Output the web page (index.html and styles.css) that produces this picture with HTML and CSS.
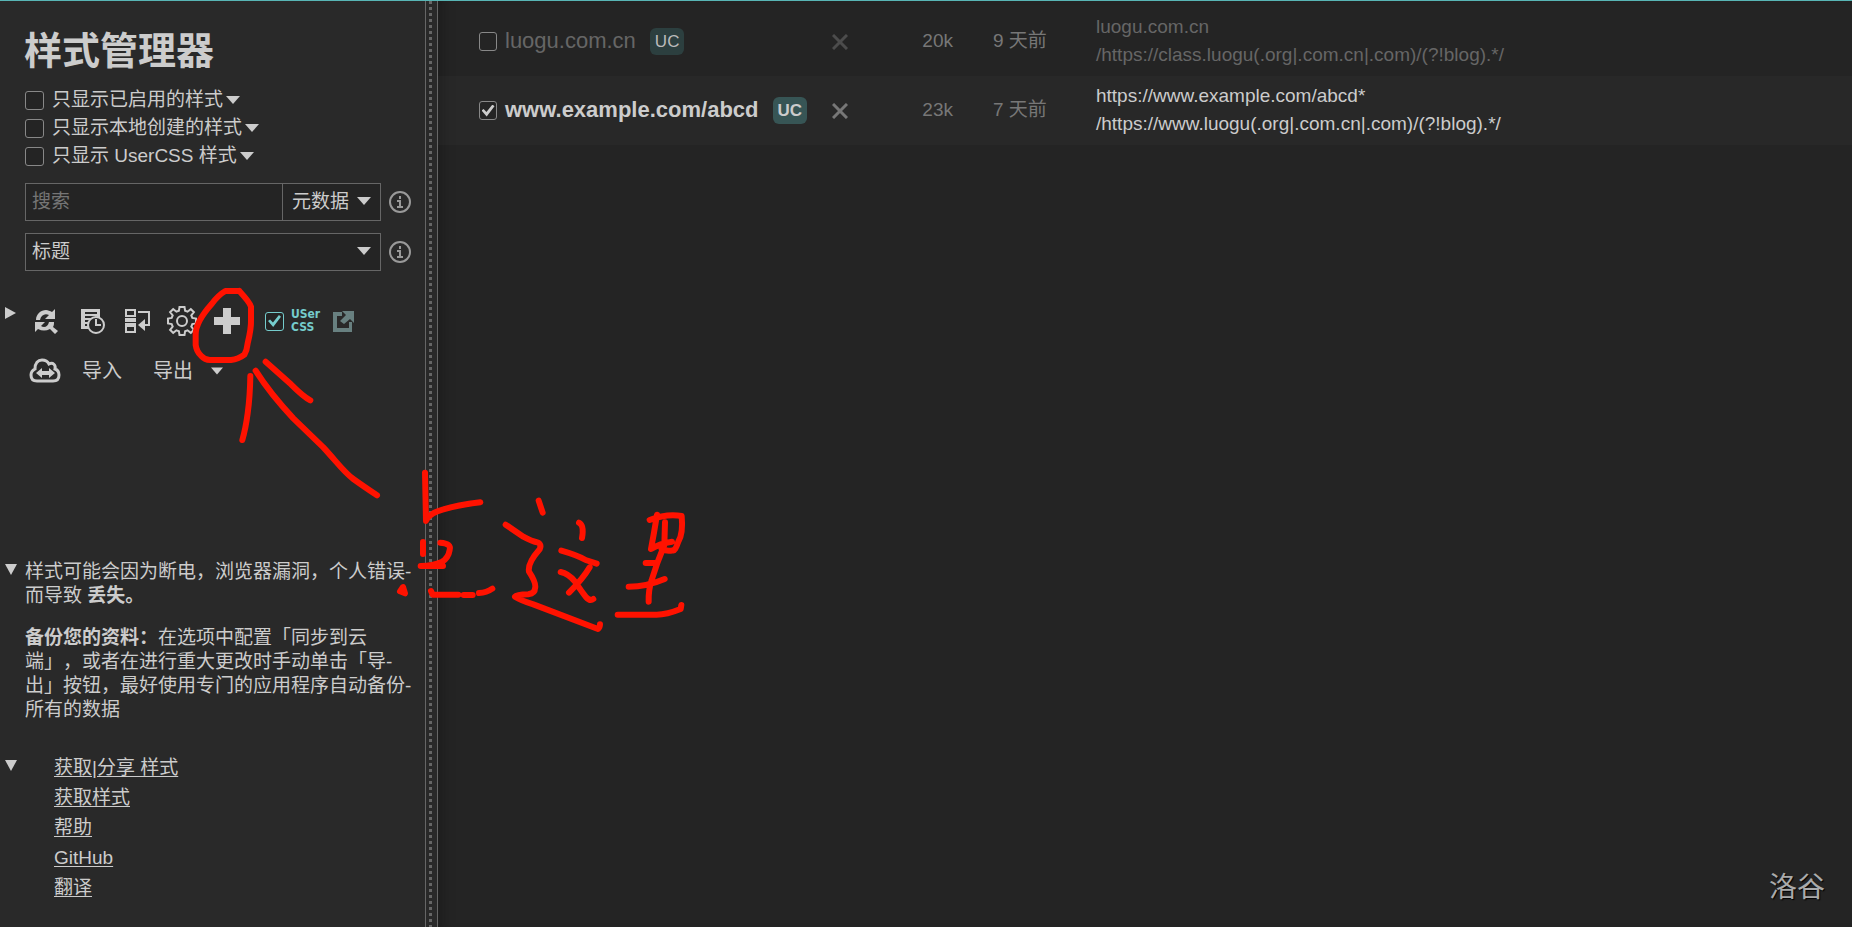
FILE: index.html
```html
<!DOCTYPE html>
<html lang="zh-CN">
<head>
  <meta charset="UTF-8">
  <meta name="viewport" content="width=device-width, initial-scale=1.0">
  <title>样式管理器</title>
  <link rel="stylesheet" href="styles.css">
</head>
<body>
  <aside class="sidebar">
    <h1>样式管理器</h1>

    <!-- filters -->
    <div class="filters">
      <div class="filter">
        <input type="checkbox" id="only-enabled">
        <label for="only-enabled">只显示已启用的样式</label>
        <svg class="arrow" viewBox="0 0 14 8"><path d="M0 0h14L7 8z"/></svg>
      </div>
      <div class="filter">
        <input type="checkbox" id="only-local">
        <label for="only-local">只显示本地创建的样式</label>
        <svg class="arrow" viewBox="0 0 14 8"><path d="M0 0h14L7 8z"/></svg>
      </div>
      <div class="filter">
        <input type="checkbox" id="only-usercss">
        <label for="only-usercss">只显示 UserCSS 样式</label>
        <svg class="arrow" viewBox="0 0 14 8"><path d="M0 0h14L7 8z"/></svg>
      </div>
    </div>

    <div class="field">
      <input type="search" class="search" placeholder="搜索" aria-label="搜索">
      <div class="select-wrap mode">
        <select aria-label="搜索范围"><option>元数据</option></select>
        <svg class="arrow" viewBox="0 0 14 8"><path d="M0 0h14L7 8z"/></svg>
      </div>
      <a href="#" class="info" aria-label="搜索帮助">
        <svg viewBox="0 0 22 22"><circle cx="11" cy="11" r="10"/><path d="M11 5v3M8 10h3v6M8 16h6"/></svg>
      </a>
    </div>
    <div class="field">
      <div class="select-wrap">
        <select aria-label="排序"><option>标题</option></select>
        <svg class="arrow" viewBox="0 0 14 8"><path d="M0 0h14L7 8z"/></svg>
      </div>
      <a href="#" class="info" aria-label="排序帮助">
        <svg viewBox="0 0 22 22"><circle cx="11" cy="11" r="10"/><path d="M11 5v3M8 10h3v6M8 16h6"/></svg>
      </a>
    </div>

    <!-- actions -->
    <section class="section actions">
      <button class="toggle" aria-label="展开">
        <svg width="11" height="12" viewBox="0 0 11 12"><path d="M0 0v12l11-6z"/></svg>
      </button>
      <div class="content">
        <div class="icons">
          <button aria-label="检查更新">
            <svg width="30" height="30" viewBox="0 0 30 30">
              <path d="M4 14C4 8 9 4 14 4c2 0 4 1 6 2l3-3v10H13l4-4C13 7 9 9 8 14z"/>
              <path d="M3 16h10l-4 4c3 2 7 1 8-4h5c0 2 0 3-1 5l5 4-3 3-5-5c-4 2-8 2-12 0l-3 3z"/>
            </svg>
          </button>
          <button aria-label="更新历史">
            <svg width="30" height="30" viewBox="0 0 30 30">
              <path fill-rule="evenodd" d="M3 3h19v20H3zM7 6v2h12V6zM7 10v2h12v-2zM7 14v2h8v-2zM7 18v2h5v-2z"/>
              <circle class="cut" cx="18" cy="19" r="8"/>
              <path class="line" d="M18 13v6h5"/>
            </svg>
          </button>
          <button aria-label="注入顺序">
            <svg width="26" height="30" viewBox="2 0 26 30">
              <path class="line" d="M4 4h9v6H4zM4 20h9v6H4zM3 13h11M3 15h11M3 18h11M16 6h11v13h-4"/>
              <path d="M16 19l7-6v12z"/>
            </svg>
          </button>
          <button aria-label="选项">
            <svg width="32" height="32" viewBox="0 0 32 32">
              <path class="line" d="M13.5 2h5l.6 3.7 2.4 1 3.3-2.6 3.1 3.1-2.6 3.3 1 2.4 3.7.6v5l-3.7.6-1 2.4 2.6 3.3-3.1 3.1-3.3-2.6-2.4 1-.6 3.7h-5l-.6-3.7-2.4-1-3.3 2.6-3.1-3.1 2.6-3.3-1-2.4-3.7-.6v-5l3.7-.6 1-2.4-2.6-3.3 3.1-3.1 3.3 2.6 2.4-1z"/>
              <circle class="line" cx="16" cy="16" r="5"/>
            </svg>
          </button>
          <button aria-label="编写新样式">
            <svg width="26" height="26" viewBox="0 0 26 26"><path d="M9 0h8v9h9v8h-9v9H9v-9H0V9h9z"/></svg>
          </button>
          <label class="usercss">
            <input type="checkbox" checked>
            <span>USer<br>CSS</span>
          </label>
          <a href="#" class="external" aria-label="在新窗口打开">
            <svg width="22" height="22" viewBox="0 0 22 22"><path d="M1 2h9v4H5v12h12v-6h3v10H1z"/><path d="M10 1h12v12l-4-4-6 5-4-3 6-6z"/></svg>
          </a>
        </div>
        <div class="backup">
          <button aria-label="同步到云端">
            <svg width="32" height="26" viewBox="0 0 32 26">
              <path class="cloud" d="M8 23C3 23 2 20 2 17c0-3 2-5 4-6C6 5 9 2 13 2c4 0 6 2 7 4 4-2 7 1 6 5 3 1 4 3 4 6 0 4-2 6-6 6z"/>
              <path d="M7 15l6-5v3h7v-3l6 5-6 5v-3h-7v3z"/>
            </svg>
          </button>
          <button>导入</button>
          <button>导出</button>
          <svg class="arrow small" viewBox="0 0 14 8"><path d="M0 0h14L7 8z"/></svg>
        </div>
      </div>
    </section>

    <section class="section notes">
      <button class="toggle" aria-label="收起">
        <svg width="12" height="11" viewBox="0 0 12 11"><path d="M0 0h12L6 11z"/></svg>
      </button>
      <div class="content">
        <p>样式可能会因为断电，浏览器漏洞，个人错误-<br>而导致 <b>丢失。</b></p>
        <p><b>备份您的资料：</b>在选项中配置「同步到云<br>端」，或者在进行重大更改时手动单击「导-<br>出」按钮，最好使用专门的应用程序自动备份-<br>所有的数据</p>
      </div>
    </section>

    <section class="section links">
      <button class="toggle" aria-label="收起">
        <svg width="12" height="11" viewBox="0 0 12 11"><path d="M0 0h12L6 11z"/></svg>
      </button>
      <nav class="content">
        <a href="#">获取|分享 样式</a>
        <a href="#">获取样式</a>
        <a href="#">帮助</a>
        <a href="#">GitHub</a>
        <a href="#">翻译</a>
      </nav>
    </section>
  </aside>
  <div class="resizer"></div>

  <main>
    <table>
      <tbody>
        <tr class="disabled">
          <td class="name">
            <div>
              <input type="checkbox" id="style-1">
              <label for="style-1">luogu.com.cn</label>
              <span class="badge">UC</span>
            </div>
          </td>
          <td class="delete"><button aria-label="删除"><svg width="16" height="16" viewBox="0 0 16 16"><path d="M1 1l14 14M15 1L1 15"/></svg></button></td>
          <td class="size">20k</td>
          <td class="age">9 天前</td>
          <td class="targets">luogu.com.cn<br>/https://class.luogu(.org|.com.cn|.com)/(?!blog).*/</td>
        </tr>
        <tr class="enabled">
          <td class="name">
            <div>
              <input type="checkbox" id="style-2" checked>
              <label for="style-2">www.example.com/abcd</label>
              <span class="badge">UC</span>
            </div>
          </td>
          <td class="delete"><button aria-label="删除"><svg width="16" height="16" viewBox="0 0 16 16"><path d="M1 1l14 14M15 1L1 15"/></svg></button></td>
          <td class="size">23k</td>
          <td class="age">7 天前</td>
          <td class="targets">https://www.example.com/abcd*<br>/https://www.luogu(.org|.com.cn|.com)/(?!blog).*/</td>
        </tr>
      </tbody>
    </table>
  </main>

  <!-- red pen marks over the page -->
  <svg class="ink" width="700" height="640" viewBox="0 0 2100 1920">
    <g transform="translate(0 840)">
      <path d="M718 33h-42Q655 45 635 72C610 100 586 135 587 165V195Q590 215 603 227Q615 240 630 240H693Q715 238 733 224Q741 210 743 190Q754 145 753 120V80Q750 68 718 33"/>
      <path d="M751 288Q750 350 743 400Q737 445 727 480"/>
      <path d="M767 272Q810 340 880 415L970 502C1010 545 1030 575 1060 597Q1085 615 1131 646"/>
      <path d="M797 245L873 313Q910 350 931 361"/>
    </g>
    <g transform="translate(1140 1350)">
      <path d="M135 68L138 213Q145 190 190 178Q230 166 301 157"/>
      <path d="M129 276V312M181 278Q215 280 209 300Q205 325 185 336Q160 348 122 348H189"/>
      <path d="M69 411L60 424 75 430zM153 423L158 434H235M251 435H278M297 429Q320 428 337 416"/>
      <path d="M476 152L488 188M377 224L430 260Q455 274 475 278Q485 285 479 298Q442 340 447 365Q470 400 465 415Q465 430 445 433Q410 434 405 440Q420 450 460 463L654 537Q660 532 660 523"/>
      <path d="M597 218Q613 225 606 264M544 302Q590 315 617 330L650 341M542 366Q565 370 585 395Q605 425 617 440Q630 455 640 447M629 352Q610 385 567 428"/>
      <path d="M831 194Q822 250 813 297Q840 280 876 275M809 210Q860 190 905 198Q910 250 895 275Q885 305 878 301Q860 305 845 297M855 217L853 285Q830 340 815 390Q805 420 806 455M797 339H830M746 410Q800 410 854 387M713 494H830Q860 494 902 477L904 465"/>
    </g>
  </svg>
  <div class="watermark">洛谷</div>
</body>
</html>
```
FILE: styles.css
```css
* {
  box-sizing: border-box;
}

body {
  margin: 0;
  min-height: 100vh;
  display: flex;
  position: relative;
  border-top: 1px solid #58b5b5;
  background: #242424;
  color: #ccc;
  font: 19px/24px "Liberation Sans", "Noto Sans CJK SC", sans-serif;
  text-spacing-trim: space-all;
}

button {
  padding: 0;
  border: 0;
  background: none;
  color: inherit;
  font: inherit;
  cursor: pointer;
}

a {
  color: inherit;
}

svg {
  display: block;
  fill: currentColor;
}

input[type="checkbox"] {
  appearance: none;
  flex: none;
  width: 19px;
  height: 19px;
  margin: 0;
  border: 1px solid #888;
  border-radius: 3px;
  background: #242424;
  color: inherit;
}

input[type="checkbox"]:checked {
  display: grid;
  place-items: center;
}

/* tick */
input[type="checkbox"]:checked::before {
  content: "";
  width: 13px;
  height: 12px;
  background: currentColor;
  clip-path: polygon(0 50%, 16% 38%, 38% 62%, 84% 0, 100% 14%, 40% 100%);
}

/* sidebar */
.sidebar {
  flex: none;
  width: 425px;
  padding-top: 24px;
  background: #292929;
}

h1 {
  margin: 0 0 8px 24px;
  font-size: 38px;
  line-height: 53px;
}

.filters {
  margin: 0 0 13px 25px;
}

.filter {
  display: flex;
  align-items: center;
  height: 28px;
}

.filter label {
  margin: 0 3px 0 8px;
}

.arrow {
  width: 14px;
  height: 8px;
}

.arrow.small {
  width: 12px;
  margin-left: 18px;
}

.field {
  display: flex;
  align-items: center;
  height: 38px;
  margin: 0 14px 12px 25px;
}

.search,
.select-wrap {
  height: 38px;
  border: 1px solid #666;
  background: #242424;
}

.search {
  flex: 1;
  min-width: 0;
  padding: 0 6px;
  border-right: 0;
  color: inherit;
  font: inherit;
}

.search::placeholder {
  color: #757575;
}

.select-wrap {
  flex: 1;
  display: grid;
  align-items: center;
}

.select-wrap.mode {
  flex: none;
  width: 99px;
}

.select-wrap select,
.select-wrap .arrow {
  grid-area: 1 / 1;
}

.select-wrap select {
  appearance: none;
  width: 100%;
  height: 36px;
  padding: 0 6px;
  border: 0;
  background: none;
  color: inherit;
  font: inherit;
}

.select-wrap.mode select {
  padding: 0 9px;
}

.select-wrap .arrow {
  justify-self: end;
  margin: 0 9px 3px 0;
  pointer-events: none;
}

.info {
  margin-left: 8px;
  color: #999;
}

.info svg {
  width: 22px;
  height: 22px;
  fill: none;
  stroke: currentColor;
  stroke-width: 2;
}

.section {
  display: flex;
  align-items: flex-start;
}

.toggle {
  flex: none;
  width: 25px;
  padding-left: 5px;
}

.actions {
  height: 277px;
  padding-top: 20px;
}

.actions .toggle {
  padding-top: 4px;
}

.icons {
  display: flex;
  align-items: center;
  gap: 16px;
  height: 36px;
  margin-left: 7px;
}

.icons .line {
  fill: none;
  stroke: currentColor;
  stroke-width: 2;
}

.icons .cut {
  fill: #292929;
  stroke: currentColor;
  stroke-width: 2;
}

.usercss {
  display: flex;
  align-items: center;
  gap: 7px;
  margin-left: 9px;
  color: #75cccc;
  font: bold 12px/13px "Liberation Sans Narrow", "DejaVu Sans Condensed", sans-serif;
}

.usercss input {
  border-color: #75cccc;
}

.external {
  margin-left: -4px;
  color: #688080;
}

.backup {
  display: flex;
  align-items: center;
  height: 36px;
  margin: 14px 0 0 4px;
  font-size: 20px;
}

.backup .cloud {
  fill: none;
  stroke: currentColor;
  stroke-width: 3;
}

.backup button + button {
  margin-left: 21px;
}

.backup button + button + button {
  margin-left: 31px;
}

.notes p {
  margin: 0 0 18px;
  white-space: nowrap;
}

.notes .toggle,
.links .toggle {
  padding-top: 4px;
}

.links {
  margin-top: 16px;
}

.links .content {
  display: flex;
  flex-direction: column;
  align-items: flex-start;
  gap: 6px;
  margin-left: 29px;
}

.links a {
  text-underline-offset: 2px;
}

/* drag handle between the panes */
.resizer {
  flex: none;
  display: flex;
  justify-content: center;
  width: 13px;
  padding-right: 2px;
  border: solid #666;
  border-width: 0 1px;
  background: #292929;
  cursor: col-resize;
}

.resizer::before {
  content: "";
  width: 3px;
  background: repeating-linear-gradient(#666 0 3px, transparent 3px 6px);
}

/* style list */
main {
  flex: 1;
  min-width: 0;
  padding-top: 6px;
  box-shadow: inset 14px 0 14px -12px #1a1a1a;
}

table {
  width: 100%;
  table-layout: fixed;
  border-collapse: collapse;
}

td {
  height: 69px;
  padding: 0 0 2px;
  line-height: 28px;
}

.enabled {
  background: rgba(255, 255, 255, 0.02);
}

.name {
  width: 384px;
  padding: 0 0 0 41px;
  font-size: 22px;
}

.name div {
  display: flex;
  align-items: center;
}

.name input {
  width: 18px;
}

.name label {
  margin: 0 14px 2px 8px;
}

.badge {
  padding: 0 5px;
  border-radius: 6px;
  background: #375555;
  font-size: 17px;
  line-height: 27px;
}

.enabled .name {
  font-weight: bold;
}

.disabled label,
.disabled .targets {
  color: #666;
}

.disabled .badge {
  background: #2c3f3f;
  color: #bbb;
}

.delete {
  width: 36px;
  padding: 0;
  color: #777;
}

.disabled .delete {
  color: #4c4c4c;
}

.delete button {
  display: block;
  margin: 0 auto;
}

.delete svg {
  fill: none;
  stroke: currentColor;
  stroke-width: 3;
}

.size {
  width: 95px;
  color: #777;
  text-align: right;
}

.age {
  width: 143px;
  padding-left: 40px;
  color: #777;
}

.ink {
  position: absolute;
  top: -1px;
  left: 0;
  fill: none;
  stroke: #ff1200;
  stroke-width: 18;
  stroke-linecap: round;
  stroke-linejoin: round;
  pointer-events: none;
}

.watermark {
  position: absolute;
  right: 27px;
  bottom: 21px;
  color: #aaa;
  font-size: 28px;
  line-height: 36px;
  text-shadow: 1px 1px 1px #000;
}
```
